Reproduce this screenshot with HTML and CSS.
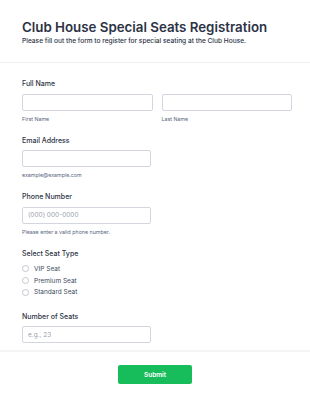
FILE: index.html
```html
<!DOCTYPE html>
<html lang="en">
<head>
    <meta charset="UTF-8">
    <meta name="viewport" content="width=device-width, initial-scale=1.0">
    <title>Club House Special Seats Registration</title>
    <link rel="stylesheet" href="styles.css">
</head>
<body>
    <div class="form-header">
        <h1>Club House Special Seats Registration</h1>
        <p>Please fill out the form to register for special seating at the Club House.</p>
    </div>
    <form class="form-body">
        <div class="field">
            <label class="field-label">Full Name</label>
            <div class="name-row">
                <div class="name-col">
                    <input type="text" class="text-input">
                    <span class="sublabel">First Name</span>
                </div>
                <div class="name-col">
                    <input type="text" class="text-input">
                    <span class="sublabel">Last Name</span>
                </div>
            </div>
        </div>
        <div class="field">
            <label class="field-label">Email Address</label>
            <input type="email" class="text-input half">
            <span class="sublabel">example@example.com</span>
        </div>
        <div class="field">
            <label class="field-label">Phone Number</label>
            <input type="tel" class="text-input half" placeholder="(000) 000-0000">
            <span class="sublabel">Please enter a valid phone number.</span>
        </div>
        <div class="field">
            <label class="field-label">Select Seat Type</label>
            <div class="radio-list">
                <label class="radio-row"><input type="radio" name="seat"><span>VIP Seat</span></label>
                <label class="radio-row"><input type="radio" name="seat"><span>Premium Seat</span></label>
                <label class="radio-row"><input type="radio" name="seat"><span>Standard Seat</span></label>
            </div>
        </div>
        <div class="field last">
            <label class="field-label">Number of Seats</label>
            <input type="number" class="text-input half" placeholder="e.g., 23">
        </div>
    </form>
    <div class="form-footer">
        <button type="button" class="submit-btn">Submit</button>
    </div>
</body>
</html>
```

FILE: styles.css
```css
body {
    font-family: Inter, "Noto Sans", Arial, sans-serif;
    background-color: #ffffff;
    color: #2c3345;
    margin: 0;
    padding: 0;
}
.form-header {
    padding: 19px 22px 16px;
    border-bottom: 1px solid #eceef2;
}
.form-header h1 {
    font-size: 13.3px;
    line-height: 16px;
    font-weight: 600;
    margin: 0;
    color: #2c3345;
}
.form-header p {
    font-size: 6.6px;
    line-height: 9px;
    font-weight: 500;
    margin: 2px 0 0;
    color: #2c3345;
}
.form-body {
    padding: 16px 18px 7px 22px;
}
.field {
    margin-bottom: 13px;
}
.field.last {
    margin-bottom: 0;
}
.field-label {
    display: block;
    font-size: 7px;
    line-height: 9px;
    font-weight: 500;
    margin-bottom: 5.5px;
    color: #2c3345;
}
.name-row {
    display: flex;
    gap: 9px;
}
.name-col {
    flex: 1;
}
.text-input {
    display: block;
    box-sizing: border-box;
    width: 100%;
    height: 17px;
    border: 1px solid #d3d6de;
    border-radius: 2px;
    padding: 0 5px;
    font-family: inherit;
    font-size: 6.5px;
    color: #2c3345;
    background: #ffffff;
    outline: none;
}
.text-input.half {
    width: 129px;
}
.text-input::placeholder {
    color: #9aa1ad;
}
.sublabel {
    display: block;
    margin-top: 5px;
    font-size: 5.3px;
    line-height: 7px;
    color: #57647e;
}
.radio-list {
    padding-top: 0;
    padding-bottom: 0.5px;
}
.radio-row {
    display: flex;
    align-items: center;
    height: 11.7px;
    font-size: 6.5px;
    color: #404b60;
}
.radio-row input {
    appearance: none;
    width: 7px;
    height: 7px;
    margin: 0 5px 0 0;
    border: 1px solid #c3c7d0;
    border-radius: 50%;
    background: #ffffff;
}
.form-footer {
    border-top: 2px solid #f3f4f6;
    padding: 13px 0 17px;
    display: flex;
    justify-content: center;
}
.submit-btn {
    width: 74px;
    height: 19px;
    background-color: #18bd5b;
    color: #ffffff;
    border: none;
    border-radius: 2px;
    font-family: inherit;
    font-size: 6.5px;
    font-weight: 600;
    cursor: pointer;
}
.submit-btn:hover {
    background-color: #16a951;
}
```
